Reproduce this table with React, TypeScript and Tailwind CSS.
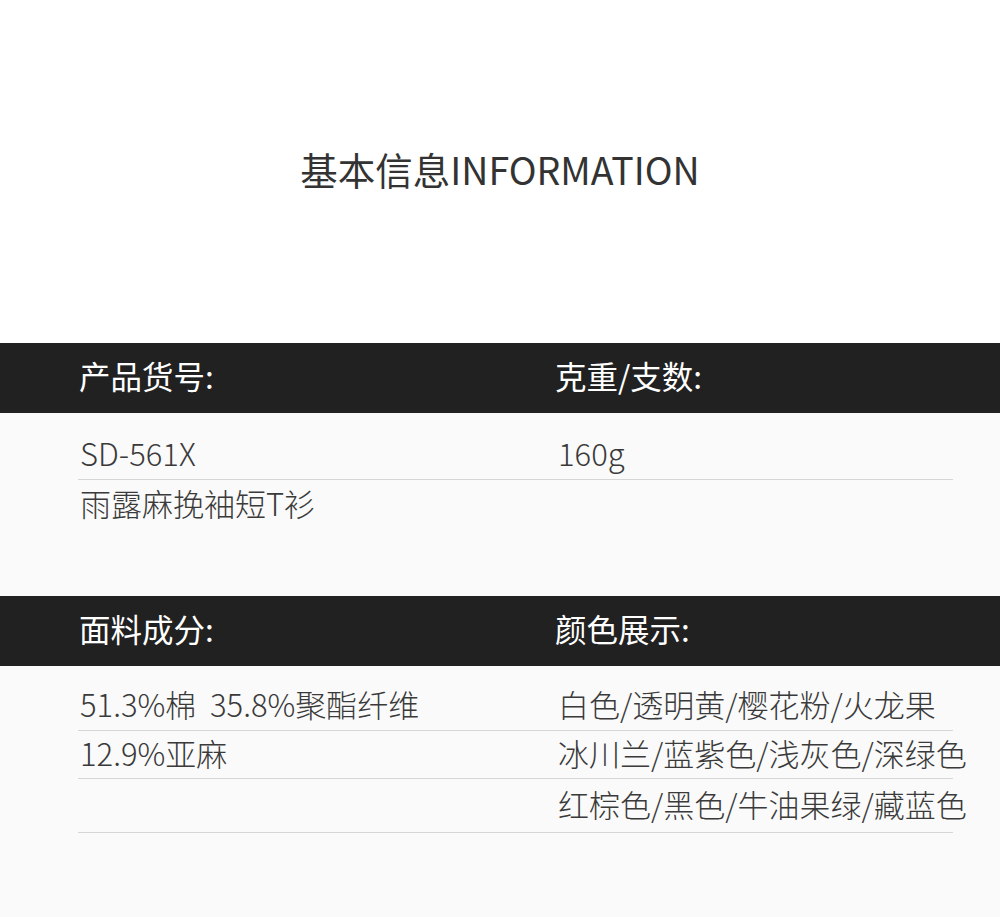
const font = { fontFamily: '"Noto Sans CJK SC", "Noto Sans", sans-serif' };
const light = {
  fontFamily: '"Noto Sans CJK SC Light", "Noto Sans CJK SC DemiLight", "Noto Sans CJK SC", "Noto Sans", sans-serif',
};

type Row = { left: string; right: string; h: string };

const section1: Row[] = [
  { left: 'SD-561X', right: '160g', h: 'h-[49px]' },
  { left: '雨露麻挽袖短T衫', right: '', h: 'h-[49px]' },
];

const section2: Row[] = [
  { left: '51.3%棉\u00a0\u00a035.8%聚酯纤维', right: '白色/透明黄/樱花粉/火龙果', h: 'h-[49px]' },
  { left: '12.9%亚麻', right: '冰川兰/蓝紫色/浅灰色/深绿色', h: 'h-[48px]' },
  { left: '', right: '红棕色/黑色/牛油果绿/藏蓝色', h: 'h-[54px]' },
];

function Header({ left, right }: { left: string; right: string }) {
  return (
    <div className="h-[70px] bg-[#212121] flex items-center pl-[79px] pb-[4px] text-white text-[31.5px] font-normal">
      <div className="w-[421px]">{left}</div>
      <div className="pl-[55px]">{right}</div>
    </div>
  );
}

function Rows({ rows, bordered }: { rows: Row[]; bordered: boolean[] }) {
  return (
    <div className="pl-[78px]" style={light}>
      {rows.map((r, i) => (
        <div key={i} className={`flex ${r.h}`}>
          <div
            className={`w-[422px] flex items-center pl-[2px] pb-[3px] whitespace-nowrap ${bordered[i] ? 'border-b border-[#d6d6d6]' : ''}`}
          >
            {r.left}
          </div>
          <div
            className={`w-[453px] flex items-center pl-[58px] pb-[3px] whitespace-nowrap ${bordered[i] ? 'border-b border-[#d6d6d6]' : ''}`}
          >
            {r.right}
          </div>
        </div>
      ))}
    </div>
  );
}

export default function App() {
  return (
    <div className="w-[1000px] h-[917px] bg-[#fafafa] overflow-hidden" style={font}>
      <div className="h-[343px] bg-white flex items-center justify-center pb-[4px]">
        <h1 className="text-[37.5px] font-normal text-[#333333]">基本信息INFORMATION</h1>
      </div>

      <Header left="产品货号:" right="克重/支数:" />
      <div className="h-[183px] pt-[18px] text-[31px] text-[#3a3a3a]">
        <Rows rows={section1} bordered={[true, false]} />
      </div>

      <Header left="面料成分:" right="颜色展示:" />
      <div className="pt-[16px] text-[31px] text-[#3a3a3a]">
        <Rows rows={section2} bordered={[true, true, true]} />
      </div>
    </div>
  );
}
